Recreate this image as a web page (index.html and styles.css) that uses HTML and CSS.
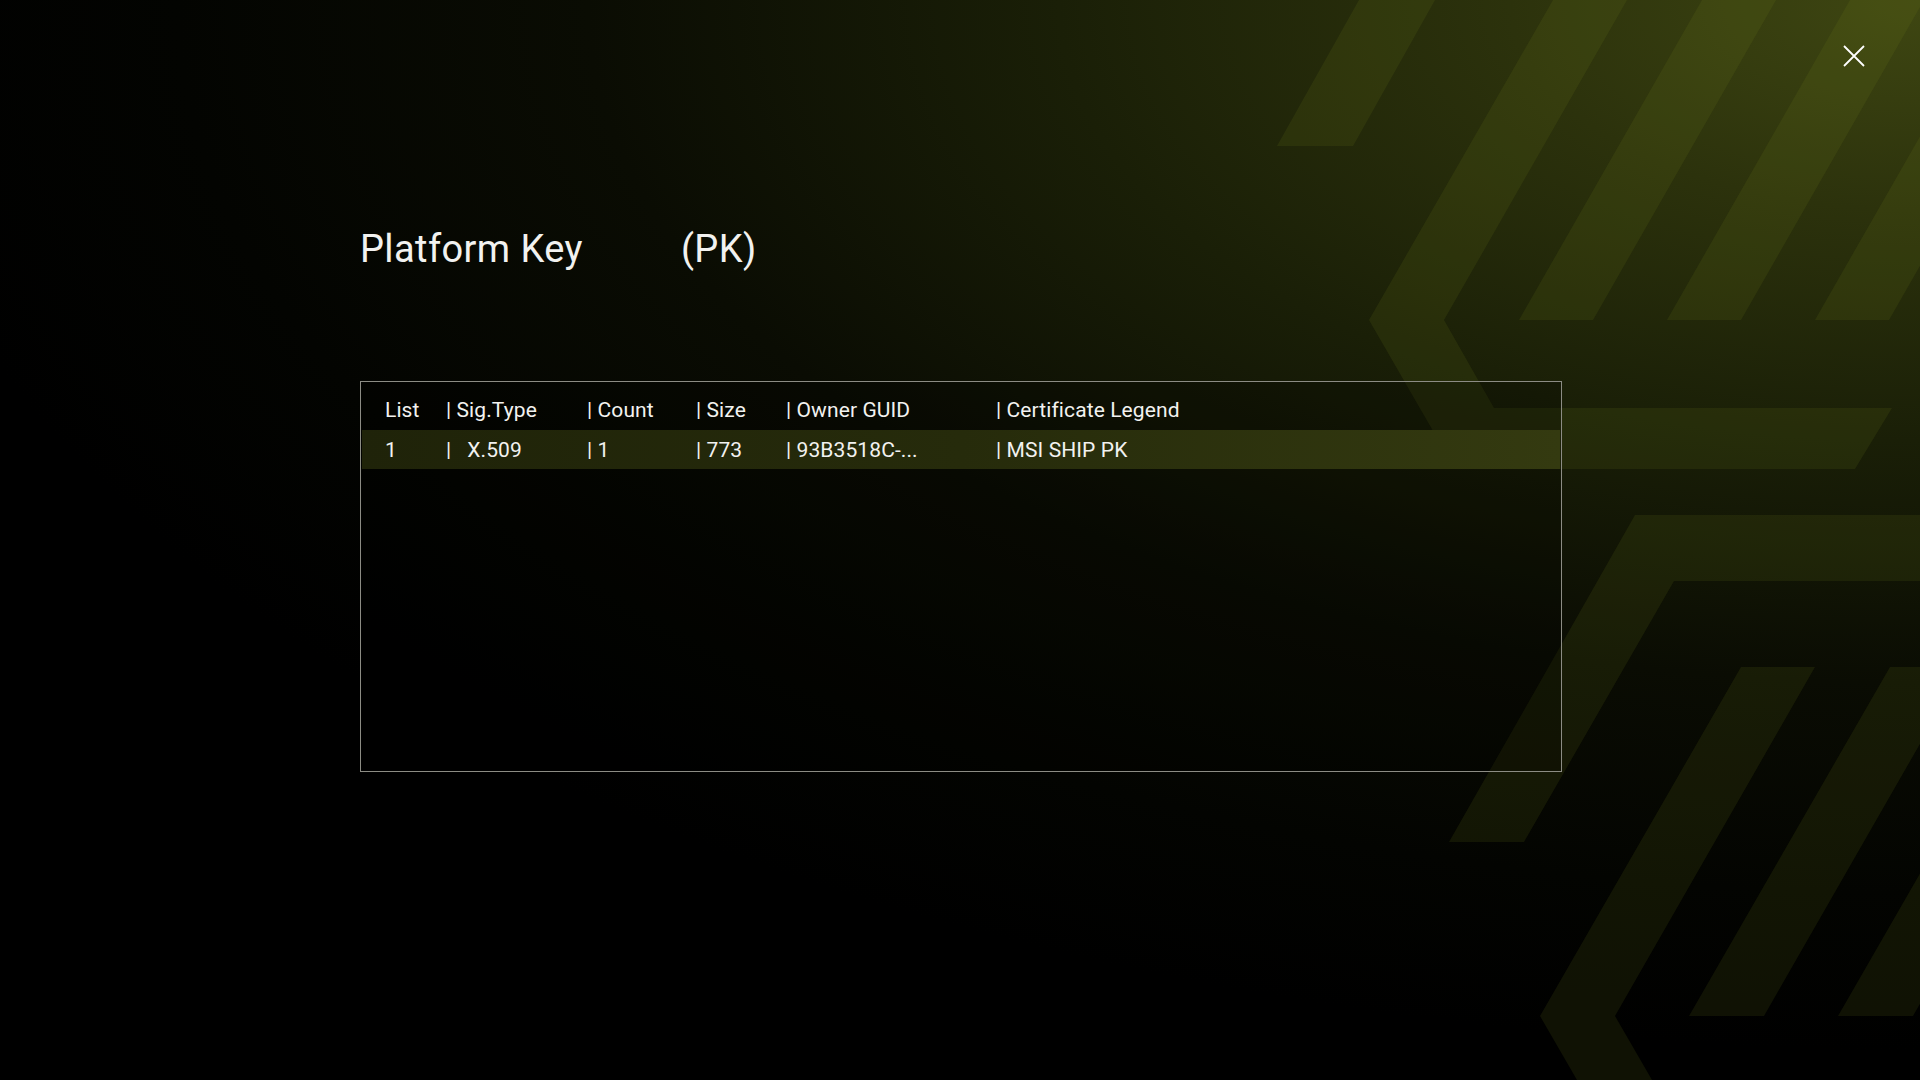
FILE: index.html
```html
<!DOCTYPE html>
<html lang="en">
<head>
<meta charset="utf-8">
<title>Platform Key (PK)</title>
<link rel="stylesheet" href="styles.css">
</head>
<body>
<div class="screen">
  <svg class="bg-shapes" viewBox="0 0 1920 1080" preserveAspectRatio="none" aria-hidden="true">
    <g class="shape">
      <polygon points="1359,0 1435,0 1353,146 1277,146"/>
      <polygon points="1553,0 1627,0 1444,320 1494,408 1892,408 1855,469 1455,469 1369,320"/>
      <polygon points="1702,0 1776,0 1593,320 1519,320"/>
      <polygon points="1850,0 1924,0 1741,320 1667,320"/>
      <polygon points="1998,0 2072,0 1889,320 1815,320"/>
      <polygon points="1635,515 1920,515 1920,581 1674,581 1524,842 1449,842"/>
      <polygon points="1741,667 1815,667 1615,1016 1652,1080 1577,1080 1540,1016"/>
      <polygon points="1890,667 1964,667 1764,1016 1689,1016"/>
      <polygon points="2039,667 2113,667 1913,1016 1838,1016"/>
    </g>
  </svg>

  <button class="close" aria-label="Close">
    <svg viewBox="0 0 22 22" width="22" height="22">
      <path d="M1 1 L21 21 M21 1 L1 21" stroke="#ffffff" stroke-width="1.8" fill="none"/>
    </svg>
  </button>

  <main class="content">
    <h1 class="title"><span>Platform Key</span><span class="abbr">(PK)</span></h1>

    <section class="table">
      <div class="row head">
        <span>List</span>
        <span>| Sig.Type</span>
        <span>| Count</span>
        <span>| Size</span>
        <span>| Owner GUID</span>
        <span>| Certificate Legend</span>
      </div>
      <div class="row item selected">
        <span>1</span>
        <span>|<span class="gap">X.509</span></span>
        <span>| 1</span>
        <span>| 773</span>
        <span>| 93B3518C-...</span>
        <span>| MSI SHIP PK</span>
      </div>
    </section>
  </main>
</div>
</body>
</html>
```

FILE: styles.css
```css
* { box-sizing: border-box; }

html, body {
  margin: 0;
  padding: 0;
  background: #000;
}

.screen {
  position: relative;
  width: 1920px;
  height: 1080px;
  overflow: hidden;
  font-family: Roboto, "Noto Sans", "Liberation Sans", sans-serif;
  color: #f2f2f0;
  background:
    radial-gradient(ellipse 2050px 1050px at 100% 0%,
      #3f4712 0%,
      #2c320c 20%,
      #1a1f07 42%,
      #0a0c03 65%,
      #030401 85%,
      #000 100%);
}

.bg-shapes {
  position: absolute;
  left: 0;
  top: 0;
  width: 1920px;
  height: 1080px;
}

.shape polygon {
  fill: rgba(120, 136, 30, 0.13);
}

.close {
  position: absolute;
  top: 45px;
  left: 1843px;
  width: 22px;
  height: 22px;
  padding: 0;
  margin: 0;
  border: 0;
  background: transparent;
  display: block;
}

.close svg { display: block; }

.content {
  position: relative;
  padding: 227px 0 0 360px;
}

.title {
  margin: 0;
  font-weight: 400;
  font-size: 38px;
  line-height: 44px;
  height: 44px;
  display: flex;
  letter-spacing: 0.4px;
}

.title .abbr {
  margin-left: 98px;
}

.table {
  margin-top: 110px;
  width: 1202px;
  height: 391px;
  border: 1px solid #8c8c84;
  background: rgba(0, 0, 0, 0.22);
  padding: 0 1px;
}

.row {
  display: grid;
  grid-template-columns: 61px 141px 109px 90px 210px 1fr;
  padding-left: 23px;
  font-size: 21px;
  letter-spacing: 0.1px;
  white-space: pre;
}

.row.head {
  padding-top: 8px;
  line-height: 40px;
  height: 48px;
}

.row.item {
  padding-top: 2px;
  line-height: 37px;
  height: 39px;
}

.row.selected {
  background: linear-gradient(90deg, #1f2309 0%, #262b0b 50%, #343a10 100%);
}

.gap { padding-left: 16px; }
```
